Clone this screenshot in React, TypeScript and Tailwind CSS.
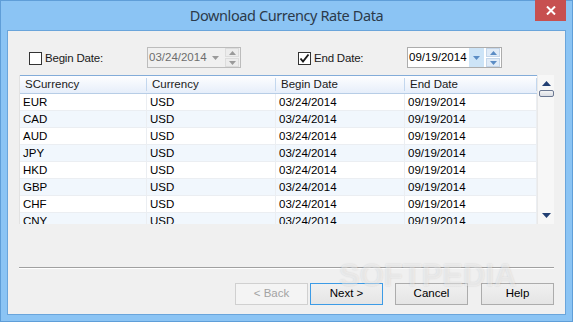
import React from "react";

const rows = ["EUR", "CAD", "AUD", "JPY", "HKD", "GBP", "CHF", "CNY"];

function Check({ checked }: { checked?: boolean }) {
  return (
    <div className="w-[13px] h-[13px] border border-[#333333] bg-white flex items-center justify-center">
      {checked && (
        <svg width="11" height="11" viewBox="0 0 11 11">
          <path d="M1.5 5.5 L4 8.5 L9.5 1.5" stroke="#1a1a1a" strokeWidth="1.9" fill="none" />
        </svg>
      )}
    </div>
  );
}

function Tri({ up, color, w = 7 }: { up?: boolean; color: string; w?: number }) {
  const h = Math.ceil(w / 2);
  return (
    <svg width={w} height={h} viewBox={`0 0 ${w} ${h}`}>
      <path d={up ? `M0 ${h} L${w / 2} 0 L${w} ${h} Z` : `M0 0 L${w} 0 L${w / 2} ${h} Z`} fill={color} />
    </svg>
  );
}

function DateBox({ value, disabled }: { value: string; disabled?: boolean }) {
  return (
    <div
      className={`h-[21px] border flex items-center ${
        disabled
          ? "w-[94px] border-[#bcbcbc] bg-[#f0f0f0] text-[#6d6d6d]"
          : "w-[95px] border-[#acacac] bg-white text-black"
      }`}
    >
      <span className={`pl-[1px] leading-none ${disabled ? "w-[60px]" : "w-[61px]"}`}>{value}</span>
      <div
        className={`w-[15px] h-[19px] flex items-center justify-center ${
          disabled ? "" : "bg-[#cde4f7]"
        }`}
      >
        <Tri color={disabled ? "#9a9a9a" : "#5b8cc4"} w={7} />
      </div>
      <div className="ml-[2px] w-[14px] h-[19px] flex flex-col gap-[1px]">
        <div
          className={`flex-1 flex items-center justify-center ${
            disabled ? "bg-[#ececec] border border-[#dcdcdc]" : "bg-[#e0ebf7] border border-[#c4d6ea]"
          }`}
        >
          <Tri up color={disabled ? "#9a9a9a" : "#5b8cc4"} w={7} />
        </div>
        <div
          className={`flex-1 flex items-center justify-center ${
            disabled ? "bg-[#ececec] border border-[#dcdcdc]" : "bg-[#e0ebf7] border border-[#c4d6ea]"
          }`}
        >
          <Tri color={disabled ? "#9a9a9a" : "#5b8cc4"} w={7} />
        </div>
      </div>
    </div>
  );
}

function Btn({ children, kind }: { children: React.ReactNode; kind?: "disabled" | "default" }) {
  const cls =
    kind === "disabled"
      ? "border-[#d0d0d0] bg-[#f4f4f4] text-[#a3a3a3]"
      : kind === "default"
      ? "border-[#3c9be6] bg-gradient-to-b from-[#f0f0f0] to-[#e5e5e5] text-black"
      : "border-[#acacac] bg-gradient-to-b from-[#f0f0f0] to-[#e5e5e5] text-black";
  return (
    <div className={`w-[73px] h-[22px] border flex items-center justify-center ${cls}`}>{children}</div>
  );
}

export default function App() {
  return (
    <div
      className="relative w-[573px] h-[322px] bg-[#8bc4f4] border border-[#5f9ed8] flex flex-col text-[11.5px]"
      style={{ fontFamily: '"Liberation Sans", Arial, sans-serif' }}
    >
      <div className="h-[29px] flex items-center justify-center">
        <span
          className="text-[14.5px] tracking-[-0.4px] text-[#2b3a4a] pt-[1px]"
          style={{ fontFamily: '"Noto Sans", "Open Sans", sans-serif' }}
        >
          Download Currency Rate Data
        </span>
      </div>
      <div className="absolute top-[-1px] right-[6px] w-[31px] h-[21px] bg-[#c75050] flex items-center justify-center">
        <svg width="10" height="9" viewBox="0 0 10 9">
          <path d="M1 0.5 L9 8.5 M9 0.5 L1 8.5" stroke="white" strokeWidth="2" />
        </svg>
      </div>

      <div className="mx-[6px] mb-[6px] flex-1 border border-[#6aa5db] bg-[#f0f0f0] flex flex-col">
        {/* top controls */}
        <div className="h-[44px] pt-[16px] flex items-start">
          <div className="ml-[21px] w-[118px] mt-[3px] flex items-center">
            <Check />
            <span className="ml-[3px] text-[#1a1a1a] tracking-[-0.2px]">Begin Date:</span>
          </div>
          <DateBox value="03/24/2014" disabled />
          <div className="ml-[57px] w-[109px] mt-[3px] flex items-center">
            <Check checked />
            <span className="ml-[3px] text-[#1a1a1a] tracking-[-0.2px]">End Date:</span>
          </div>
          <DateBox value="09/19/2014" />
        </div>

        {/* table */}
        <div className="ml-[11px] w-[535px] h-[149px] flex overflow-hidden">
          <div className="w-[518px] bg-white flex flex-col border-l border-[#e2e2e2]">
            <div className="h-[20px] grid grid-cols-[127px_129px_129px_132px] border-t border-[#83acd9] border-b border-b-[#b7cde6] bg-gradient-to-b from-[#fefeff] to-[#e6eefa]">
              {["SCurrency", "Currency", "Begin Date", "End Date"].map((h) => (
                <div key={h} className="relative flex items-center pl-[5px] text-[#1a1a1a]">
                  {h}
                  <div className="absolute right-0 top-[2px] bottom-[2px] w-px bg-[#c3d7ee]" />
                </div>
              ))}
            </div>
            {rows.map((r, i) => (
              <div
                key={r}
                className={`h-[17px] shrink-0 grid grid-cols-[127px_129px_129px_132px] border-b border-[#ebeef2] ${
                  i % 2 === 1 ? "bg-[#f1f7fd]" : "bg-white"
                }`}
              >
                {[r, "USD", "03/24/2014", "09/19/2014"].map((c, j) => (
                  <div key={j} className="flex items-center pl-[3px] border-r border-[#ebeef2] text-black leading-none">
                    {c}
                  </div>
                ))}
              </div>
            ))}
          </div>
          <div className="w-[17px] bg-[#f7f7f7] border-l border-[#e9e9e9] flex flex-col items-center">
            <div className="mt-[6px]">
              <Tri up color="#213f73" w={9} />
            </div>
            <div className="mt-[4px] w-[15px] h-[7px] rounded-[2px] border border-[#6b7892] bg-gradient-to-b from-[#f4f4f4] to-[#d9dde4]" />
            <div className="mt-auto mb-[6px]">
              <Tri color="#213f73" w={9} />
            </div>
          </div>
        </div>

        {/* separator */}
        <div className="mt-[43px] ml-[11px] w-[535px] h-px bg-[#a0a0a0] border-b border-white box-content" />

        {/* buttons */}
        <div className="mt-[14px] flex justify-end pr-[11px]">
          <Btn kind="disabled">&lt; Back</Btn>
          <div className="ml-[2px]">
            <Btn kind="default">Next &gt;</Btn>
          </div>
          <div className="ml-[12px]">
            <Btn>Cancel</Btn>
          </div>
          <div className="ml-[13px]">
            <Btn>Help</Btn>
          </div>
        </div>

        <div
          className="pointer-events-none absolute left-[338px] top-[252px] text-[31px] font-bold text-white/45 [text-shadow:0_0_2px_rgba(0,0,0,0.12)]"
          style={{ fontFamily: '"Liberation Sans", Arial, sans-serif' }}
        >
          SOFTPEDIA
        </div>
      </div>
    </div>
  );
}
